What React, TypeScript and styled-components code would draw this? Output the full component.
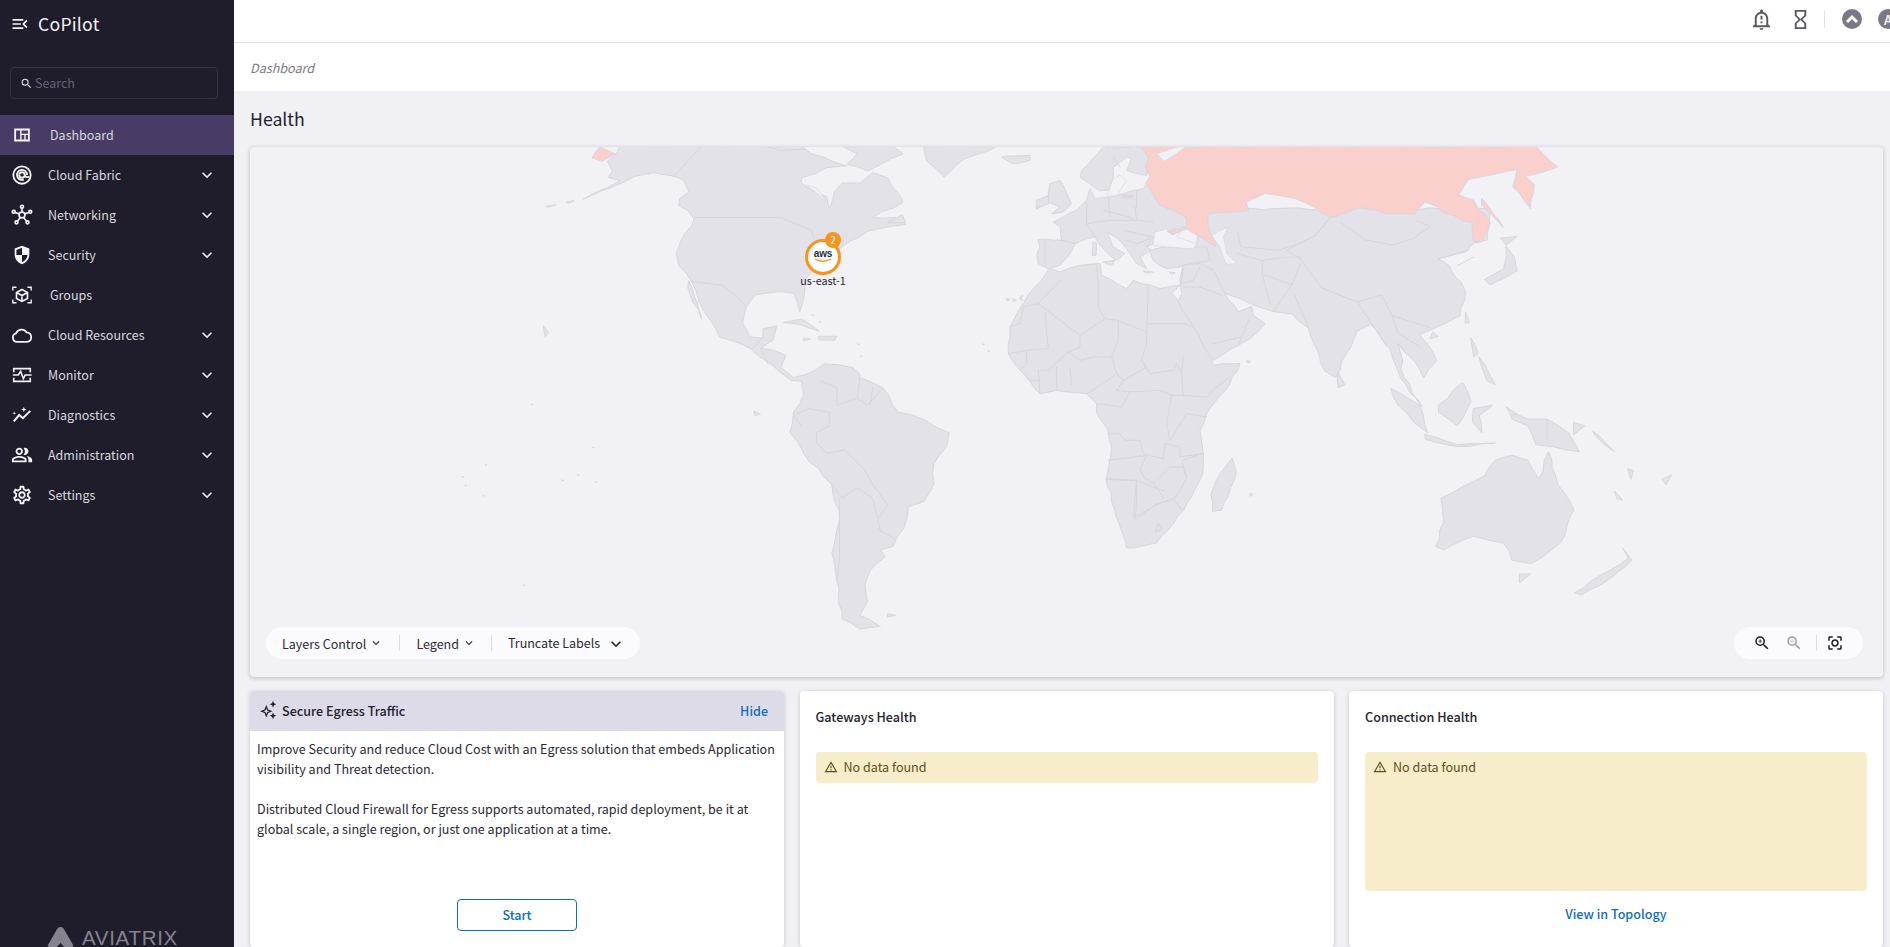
import React from "react";
import styled, { createGlobalStyle } from "styled-components";
import {
  MdExpandMore, MdKeyboardArrowDown, MdMenuOpen, MdOutlineCenterFocusStrong, MdOutlineHourglassEmpty,
  MdOutlineNotificationImportant, MdOutlinePeopleAlt, MdOutlineSettings, MdOutlineWarningAmber, MdOutlineZoomIn,
  MdOutlineZoomOut, MdSearch,
} from "react-icons/md";

const FONT = `"Noto Sans CJK JP", "Noto Sans", sans-serif`;

const Global = createGlobalStyle`
  html, body { margin: 0; padding: 0; height: 947px; overflow: hidden; background: #f0f0f5; }
  body { font-family: ${FONT}; font-size: 12.55px; color: #2a2833; }
  * { box-sizing: border-box; }
`;

const Shell = styled.div`display: flex; width: 1890px; height: 947px; overflow: hidden;`;
const Sidebar = styled.aside`
  width: 234px; height: 947px; flex: none; background: #1f1c2b; display: flex; flex-direction: column; overflow: hidden;
`;
const Brand = styled.div`
  height: 47px; display: flex; align-items: center; padding: 0 0 2px 10px; gap: 8px; color: #f2f2f4; font-size: 17.7px; letter-spacing: .2px;
  svg { font-size: 20px; margin-top: 2px; }
`;
const SearchBox = styled.div`
  margin: 20px 16px 16px 10px; height: 32px; border: 1px solid #35314a; border-radius: 4px;
  display: flex; align-items: center; padding: 0 0 2px 9px; gap: 2px; color: #67637a; font-size: 12.5px;
  svg { color: #e4e3e8; font-size: 13px; margin-top: 2px; }
`;
const NavList = styled.nav`display: flex; flex-direction: column;`;
const NavItem = styled.div<{ $active?: boolean }>`
  height: 40px; display: flex; align-items: center; position: relative; padding-left: 10px; padding-right: 17px;
  background: ${(p) => (p.$active ? "#483c66" : "transparent")}; color: #d9d8de; font-size: 12.5px;
`;
const NavIcon = styled.span<{ $wide?: boolean }>`
  width: 24px; height: 24px; flex: none; margin-right: ${(p) => (p.$wide ? 16 : 14)}px; color: #f4f4f6; display: flex; align-items: center; justify-content: center;
  svg { width: 22px; height: 22px; display: block; }
`;
const NavLabel = styled.span`flex: 1; margin-top: -2px;`;
const NavChevron = styled(MdExpandMore)`font-size: 20px; color: #ecebef;`;
const LogoClip = styled.div`
  margin-top: auto; height: 20px; overflow: hidden; padding-left: 47px; display: flex; align-items: flex-start; gap: 8px;
  color: #85838e;
`;
const LogoText = styled.span`
  font-family: "Liberation Sans", sans-serif; font-size: 20.5px; line-height: 19px; margin-top: 1px; letter-spacing: .7px; font-weight: 400;
`;

const Main = styled.main`flex: 1; min-width: 0; display: flex; flex-direction: column; height: 947px; overflow: hidden;`;
const TopBar = styled.header`
  height: 43px; flex: none; background: #fff; border-bottom: 1px solid #e3e3e6; display: flex; align-items: center; justify-content: flex-end;
  padding-bottom: 4px; overflow: hidden; color: #5a5865;
`;
const TopIcon = styled.span<{ $mr: number }>`
  display: flex; margin-right: ${(p) => p.$mr}px; svg { font-size: 23px; display: block; }
`;
const TopDivider = styled.span`width: 1px; height: 17px; background: #e2e2e6; margin-right: 17px;`;
const Round = styled.span<{ $mr: number }>`
  flex: none; width: 20px; height: 20px; border-radius: 50%; background: #7b7985; color: #fff; display: flex; align-items: center; justify-content: center;
  margin-right: ${(p) => p.$mr}px; font-size: 13px; font-weight: 500;
  svg { width: 14px; height: 14px; }
`;
const Crumbs = styled.div`
  height: 48px; flex: none; background: #fff; display: flex; align-items: center; padding-left: 16px; font-style: italic; color: #7b7a82; font-size: 12.6px;
`;
const Content = styled.div`flex: 1; background: #f0f0f5; padding: 0 7px 0 16px;`;
const Title = styled.h1`
  margin: 0; height: 56px; font-size: 17.7px; font-weight: 400; color: #24222c; line-height: 54px;
`;
const MapCard = styled.section`
  position: relative; height: 530px; background: #f1f1f6; border-radius: 4px; box-shadow: 0 1px 4px rgba(30, 28, 45, .25); overflow: hidden;
`;
const MapSvg = styled.svg`
  display: block; width: 100%; height: 100%;
  polygon, polyline { vector-effect: non-scaling-stroke; stroke-linejoin: round; stroke-linecap: round; }
`;
const Toolbar = styled.div`
  position: absolute; left: 16px; bottom: 18px; width: 374px; height: 32px; border-radius: 16px; background: #fbfbfd;
  display: flex; align-items: center; padding-left: 16px; color: #2b2934; font-size: 12.5px;
`;
const ToolLabel = styled.span`display: flex; align-items: center; white-space: nowrap; svg { font-size: 14px; margin-left: 3px; }`;
const ToolSep = styled.span<{ $ml: number; $mr: number }>`
  flex: none; width: 1px; height: 16px; background: #dcdce4; margin: 0 ${(p) => p.$mr}px 0 ${(p) => p.$ml}px;
`;
const TruncLabel = styled.span`display: flex; align-items: center; white-space: nowrap; margin-top: -2px; svg { font-size: 20px; margin: 4px 0 0 6px; }`;
const ZoomPill = styled.div`
  position: absolute; right: 20px; bottom: 18px; width: 129px; height: 32px; border-radius: 16px; background: #fbfbfd; display: flex; align-items: center;
  padding-left: 19px;
`;
const ZoomBtn = styled.span<{ $dim?: boolean; $mr: number }>`
  display: flex; margin-right: ${(p) => p.$mr}px; color: ${(p) => (p.$dim ? "#9c9ba2" : "#1d1b26")}; svg { font-size: 18px; }
`;
const Marker = styled.div`
  position: absolute; left: 555px; top: 92px; width: 36px; display: flex; flex-direction: column; align-items: center;
`;
const Ring = styled.div`
  position: relative; width: 36px; height: 36px; border-radius: 50%; border: 3px solid #f7941d; background: #fff; display: flex; flex-direction: column; align-items: center; justify-content: center;
`;
const AwsWord = styled.span`font: 700 10px/8px "Liberation Sans", sans-serif; color: #232f3e; margin-top: -1px; letter-spacing: -.2px;`;
const Badge = styled.span`
  position: absolute; right: -3px; top: -10px; width: 16px; height: 16px; border-radius: 50%; background: #f7941d; color: #fff; font-size: 10px; line-height: 15px; text-align: center;
`;
const MarkerLabel = styled.span`font-size: 10.8px; line-height: 14px; color: #2a2833; white-space: nowrap; margin-top: -2px;`;

const Cards = styled.div`display: grid; grid-template-columns: 534px 534px 1fr; gap: 15.5px; margin-top: 14px; height: 256px;`;
const Card = styled.section`
  background: #fff; border-radius: 4px; box-shadow: 0 1px 4px rgba(30, 28, 45, .2); display: flex; flex-direction: column; min-width: 0;
`;
const PromoHead = styled.div`
  height: 40px; background: #dedbe9; border-radius: 4px 4px 0 0; display: flex; align-items: center; padding: 0 16px 2px 8px; font-weight: 500; color: #24222c;
  svg { width: 20px; height: 20px; margin-right: 4px; }
`;
const PromoTitle = styled.span`flex: 1;`;
const LinkText = styled.span`color: #0f6cbd; font-weight: 500;`;
const PromoBody = styled.div`padding: 8px 7px 0; line-height: 20px; color: #2a2833; flex: 1;`;
const Para = styled.p`margin: 0 0 20px;`;
const StartRow = styled.div`display: flex; justify-content: center; margin-bottom: 16px;`;
const StartButton = styled.button`
  width: 120px; height: 32px; border: 1px solid #0f6cbd; border-radius: 4px; background: #fff; color: #0f6cbd; font: 500 12.5px ${FONT}; padding: 0 0 2px;
`;
const HealthBody = styled.div`padding: 0 16px; display: flex; flex-direction: column; flex: 1;`;
const HealthTitle = styled.h2`margin: 0; height: 61px; line-height: 52px; font-size: 12.6px; font-weight: 500; color: #24222c;`;
const Notice = styled.div<{ $tall?: boolean }>`
  height: ${(p) => (p.$tall ? "139px" : "31px")}; background: #f7edcb; border-radius: 4px; padding: 0 8px; display: flex; align-items: flex-start; gap: 6px;
  color: #5e4e1c; line-height: 29px;
  svg { font-size: 14px; margin-top: 8px; flex: none; }
`;
const TopologyLink = styled(LinkText)`text-align: center; line-height: 20px; margin-top: 13px;`;

const LAND = "#e3e2e8";
const EDGE = "#d7d6de";
const BG = "#f1f1f6";
const PINK = "#f9d0cb";

/* Breaks long straight coast segments into short ones with small fixed offsets, so a coast reads as a coast. */
const rough = (points: string, amp = 3.5) => {
  const pts = points.trim().split(/\s+/).map((s) => s.split(",").map(Number));
  const out: string[] = [];
  let seed = 7;
  pts.forEach(([x, y], i) => {
    const [nx, ny] = pts[(i + 1) % pts.length];
    out.push(`${x},${y}`);
    const len = Math.hypot(nx - x, ny - y);
    const n = Math.floor(len / 22);
    for (let k = 1; k < n; k++) {
      seed = (seed * 31 + 11) % 101;
      const off = ((seed % 21) / 10 - 1) * amp;
      const t = k / n;
      out.push(`${(x + (nx - x) * t + (-(ny - y) / len) * off).toFixed(1)},${(y + (ny - y) * t + ((nx - x) / len) * off).toFixed(1)}`);
    }
  });
  return out.join(" ");
};

const Land = ({ p, fill = LAND }: { p: string; fill?: string }) => <polygon points={rough(p)} fill={fill} stroke={EDGE} strokeWidth={1} />;
const Sea = ({ p }: { p: string }) => <polygon points={rough(p, 2)} fill={BG} stroke={EDGE} strokeWidth={0.6} />;
const Border = ({ p }: { p: string }) => <polyline points={p} fill="none" stroke={EDGE} strokeWidth={1} />;
const Speck = ({ x, y }: { x: number; y: number }) => <polygon points={`${x},${y} ${x + 6},${y + 3} ${x + 1},${y + 6}`} fill={EDGE} />;

const americas = [
  "745,18 735,45 720,62 730,90 722,108 745,118 700,150 672,172 730,137 775,105 810,95 850,105 868,115 880,150 862,170 860,190 878,205 890,228 885,250 865,290 855,330 860,365 885,410 900,470 925,530 940,572 1000,605 1040,650 1080,698 1100,700 1105,740 1085,790 1078,850 1105,910 1160,1000 1175,1100 1160,1200 1170,1280 1180,1390 1215,1420 1255,1412 1215,1380 1230,1340 1225,1290 1235,1250 1265,1210 1255,1190 1280,1180 1300,1130 1310,1065 1340,1050 1360,1000 1360,940 1385,890 1390,850 1345,815 1290,790 1260,720 1215,690 1215,680 1200,660 1145,650 1110,680 1085,690 1060,660 1070,625 1045,610 1020,605 1045,580 1052,540 1025,548 1025,575 1000,572 985,530 992,485 1010,450 1060,440 1085,445 1097,500 1105,460 1110,400 1180,310 1230,265 1260,255 1305,245 1285,225 1240,225 1300,180 1270,110 1240,95 1215,125 1180,125 1165,150 1155,200 1150,165 1100,125 1100,110 1150,80 1190,75 1120,40 1100,18",
  "880,410 905,520 878,430",
  "1065,530 1100,520 1135,555 1095,535",
  "1135,570 1170,570 1165,582 1135,580",
  "1105,575 1118,578 1105,582",
  "1340,18 1345,60 1380,108 1420,55 1485,18",
  "1180,18 1210,40 1190,70 1230,90 1300,40 1280,18",
  "1030,18 1060,30 1110,28 1100,18",
  "1270,240 1305,240 1298,218",
  "1270,1376 1285,1380 1270,1385",
  "595,540 605,560 598,570",
  "1008,788 1020,795 1010,800",
  "640,180 655,176 645,184", "600,192 620,188 605,195",
];
const americaLines = [
  "905,18 850,105", "890,225 1060,225 1120,262 1125,285", "885,410 945,422 975,455 992,485", "1025,575 1005,605",
  "1020,605 1035,650", "1140,700 1170,720 1170,770 1210,750 1215,690", "1210,750 1230,770 1260,720", "1235,770 1240,720",
  "1085,800 1115,780 1155,790 1155,830 1130,850 1130,880 1150,910 1185,900 1225,960 1240,1000 1270,1060 1250,1100 1240,1040 1210,1010 1180,1040 1160,1000",
  "1175,1040 1175,1220 1170,1280", "1250,1130 1285,1160", "1100,830 1085,800", "1250,1100 1255,1135",
];
const pacificSpecks = [[480, 940], [435, 975], [440, 1000], [475, 1030], [630, 985], [660, 970], [695, 990], [690, 890], [555, 1290], [570, 765], [1120, 505], [1135, 525], [1210, 590], [1215, 625], [1505, 460], [1530, 462], [1455, 590], [1465, 610]];

const afroEurasia = [
  "370,0 305,70 300,90 330,110 355,130 385,130 400,95 400,60 440,30 455,35 440,70 500,85 510,40 490,0",
  "220,225 250,210 290,190 320,160 330,125 345,155 390,150 430,140 490,125 500,110 540,175 620,210 620,240 590,240 570,250 530,255 520,290 500,300 515,310 480,330 500,365 470,350 450,320 425,285 380,255 400,300 435,320 410,340 375,310 345,270 320,275 285,290 245,280 240,240",
  "175,278 245,280 285,290 262,330 240,355 205,365 175,350 170,320 180,300",
  "510,310 560,300 620,305 680,300 690,340 620,355 590,362 560,365 520,340",
  "210,110 240,100 275,170 250,195 215,200 240,180 205,165",
  "170,160 205,145 205,170 170,185",
  "65,30 150,25 150,40 100,50",
  "340,285 350,290 348,325 338,325",
  "370,345 405,340 395,355",
  "490,372 520,375 500,378",
  "570,375 585,378 575,382",
  "210,365 240,375 300,355 360,350 365,385 440,425 460,400 540,425 600,415 575,440 600,465 640,540 695,640 700,655 780,650 750,710 680,800 660,850 670,920 668,981 611,1090 530,1188 440,1203 416,1126 378,996 395,900 385,850 350,800 350,770 320,740 230,730 180,740 120,670 85,620 90,540 130,470 165,420",
  "600,395 610,355 660,350 700,370 735,440 775,495 815,478 820,505 855,530 810,575 775,595 700,640 692,625 640,540 595,465 605,440",
  "80,455 90,458 82,462", "100,455 110,460 100,463", "120,450 128,445 122,458",
  "800,642 812,642 805,648",
];
const afroLines = [
  "175,470 300,565 375,515 410,520 500,555 505,420", "505,530 615,530 640,540", "195,497 205,605 140,610", "300,565 300,600 265,615 205,670",
  "415,520 415,580 395,630 410,680 430,700 500,660 485,640 500,590 500,555", "265,615 300,640 340,630 395,630", "410,680 370,710 320,740",
  "430,700 410,730 450,735 540,730 575,745 610,745 605,680 590,650 580,670 510,680 490,650", "610,745 680,750 710,720 750,690", "610,630 605,680",
  "450,735 425,780 350,770", "575,745 560,830 570,880 620,800 680,810", "385,860 420,860 435,880 480,880 490,920 550,935 555,890 600,900 600,930 670,920",
  "385,940 500,925 480,965 490,990 520,1010 570,960 610,960 620,990 600,1030", "380,995 470,1000 470,1060 465,1120 530,1070 580,1060 600,1030", "350,360 355,410 355,480 375,515",
  "240,400 175,470 130,480 120,530 90,540", "205,670 175,670 180,740", "230,660 230,730", "270,665 275,715", "130,680 150,700 180,700", "85,620 140,610 140,650 120,670",
  "320,170 320,230 345,270", "385,150 390,210", "470,180 470,130", "465,180 470,220 520,225", "195,280 195,350", "245,280 290,290", "320,230 390,220 470,220", "430,250 520,270 500,300", "370,190 430,205 460,215", "440,280 470,290 510,275",
  "610,355 605,410", "605,410 640,400 660,360", "660,420 725,445", "700,590 785,570 810,510", "610,420 660,420", "775,595 785,570", "400,30 420,60",
];

const asiaBase = "290,290 300,200 830,200 825,290 800,300 785,325 745,340 735,345 755,365 785,440 775,510 730,545 715,555 700,565 732,640 708,690 690,640 660,590 672,690 705,775 665,690 645,605 625,560 610,535 585,555 545,690 525,670 495,545 465,505 430,498 395,480 340,445 305,380 262,385";
const russia = "185,18 200,50 195,80 203,107 195,125 221,190 270,224 270,253 235,265 245,275 270,258 305,290 325,310 310,245 310,215 385,205 380,180 415,155 470,170 540,225 590,195 640,215 690,215 710,180 780,235 798,240 800,295 815,295 830,240 800,175 772,160 790,115 850,95 880,85 872,135 905,200 912,130 895,105 955,78 915,18";
const asiaIslands = [
  "860,310 875,340 880,380 830,420 820,405 855,375 860,340", "850,285 880,280 860,305", "785,500 792,530 785,532", "725,558 735,570 720,577",
  "795,575 808,620 800,630", "810,630 840,710 825,700 815,660", "550,675 562,710 550,720", "648,722 700,770 715,850 690,820 660,770",
  "780,705 795,760 770,830 735,790 735,770", "800,780 835,770 810,800 815,850 798,820", "710,855 770,885 840,880 770,890 712,870",
  "870,790 900,810 935,810 975,850 995,905 945,890 915,885 900,830 870,810", "985,820 1005,830 985,855", "1020,845 1060,905 1025,860",
  "355,925 362,965 335,1075 318,1078 315,1030 325,990", "740,1040 760,1025 820,975 840,930 870,915 900,930 920,985 938,905 955,1000 985,1075 960,1170 905,1230 870,1220 855,1170 800,1150 745,1190 730,1180 745,1110",
  "885,1260 905,1260 885,1285", "1075,1185 1092,1220 1050,1275 1000,1320 985,1315 1050,1250 1085,1215", "1060,1020 1075,1045 1065,1042",
  "1085,955 1095,960 1090,985", "1148,985 1165,972 1155,1000", "388,1025 393,1030 388,1034", "860,775 880,795 870,800",
];
const asiaLines = [
  "365,270 370,310 440,320 480,300 510,275 535,225", "535,225 510,275 480,300 455,320 480,345 520,430 585,470 630,450 650,510 680,525 720,545",
  "555,240 600,290 650,305 690,285 720,250 695,235", "480,360 465,420 430,498", "470,450 495,545", "410,350 410,390 425,480", "410,390 465,420",
  "585,470 610,530 640,600", "650,510 660,560 700,600", "365,330 410,350 450,340 480,340", "935,810 935,875", "770,365 800,340", "790,320 745,340",
  "230,1020 180,990 122,985", "178,990 172,1095 215,1060 245,1040 262,1075", "218,1115 226,1130 212,1138 218,1115", "208,990 228,1040", "300,910 262,930 268,975",
];

const Sparkle = () => (
  <svg viewBox="0 0 24 24" fill="#24222c">
    <path d="M10 6l2.2 5.3L17.500 13.500l-5.300 2.200L10 21l-2.200-5.300L2.500 13.500l5.300-2.200zM10 9.800l-1 2.700-2.700 1 2.700 1 1 2.700 1-2.700 2.700-1-2.700-1z" fillRule="evenodd" />
    <path d="M18 1l1.200 2.800L22 5l-2.800 1.200L18 9l-1.200-2.800L14 5l2.800-1.200zM18 15l1.200 2.800L22 19l-2.800 1.200L18 23l-1.200-2.800L14 19l2.800-1.200z" />
  </svg>
);
const DashIcon = () => (
  <svg viewBox="0 0 24 24" fill="currentColor"><path fillRule="evenodd" d="M3.500 5h17v14h-17zM5.500 7v10h4.500V7zM11.500 7v3.500H18.500V7zM11.500 12v5h3v-5zM16 12v5h2.500v-5z" /></svg>
);
const FabricIcon = () => (
  <svg viewBox="0 0 24 24" fill="none" stroke="currentColor" strokeWidth="2"><circle cx="12" cy="12" r="9.500" /><circle cx="12" cy="12" r="3" /><path d="M15 12a3 3 0 0 0 5 1.500M17.500 12A5.500 5.500 0 1 0 14 17" /></svg>
);
const NetIcon = () => (
  <svg viewBox="0 0 24 24" fill="none" stroke="currentColor" strokeWidth="1.800">
    <circle cx="12" cy="12" r="3.200" /><circle cx="12" cy="3" r="1.600" /><circle cx="3" cy="8.500" r="1.600" /><circle cx="21" cy="8.500" r="1.600" /><circle cx="6" cy="20" r="1.600" /><circle cx="18" cy="20" r="1.600" />
    <path d="M12 4.600v4.200M4.500 9.300l4.600 1.500M19.500 9.300l-4.600 1.500M7 18.700l3.200-4M17 18.700l-3.200-4" />
  </svg>
);
const ShieldIcon = () => (
  <svg viewBox="0 0 24 24" fill="currentColor"><path fillRule="evenodd" d="M12 2l8 3v6.500c0 5-3.400 9-8 10.500-4.600-1.500-8-5.500-8-10.500V5zM12 4.200V12H5.900V6.500zM12 12h6.100c-.5 3.700-2.900 6.500-6.100 7.800z" /></svg>
);
const GroupIcon = () => (
  <svg viewBox="0 0 24 24" fill="none" stroke="currentColor" strokeWidth="1.800">
    <path d="M2 7V3.500h4M22 7V3.500h-4M2 17v3.500h4M22 17v3.500h-4" strokeWidth="1.500" />
    <path d="M12 6l6 3.300v6.400L12 19l-6-3.300V9.300zM6 9.300l6 3.300 6-3.300M12 12.600V19" />
  </svg>
);
const MonitorIcon = () => (
  <svg viewBox="0 0 24 24" fill="none" stroke="currentColor" strokeWidth="1.800"><path d="M3 9V5h18v4M3 15v4h18v-4" /><path d="M2 12h6l2.500-4 3 8 2-4h7" /></svg>
);
const DiagIcon = () => (
  <svg viewBox="0 0 24 24" fill="none" stroke="currentColor" strokeWidth="2.200"><path d="M3 19l6-7 4 3.500 8-8" /><path d="M14 3l.8 2.200L17 6l-2.200.8L14 9l-.8-2.200L11 6l2.200-.8zM3.500 8l.5 1.500L5.500 10 4 10.500 3.500 12 3 10.500 1.500 10 3 9.500z" fill="currentColor" stroke="none" /></svg>
);
const CloudIcon = () => (
  <svg viewBox="0 0 24 24" fill="none" stroke="currentColor" strokeWidth="1.900"><path d="M6.500 19.500A4.700 4.700 0 0 1 5.500 10.300 6.500 6.500 0 0 1 17 9.200a5.200 5.200 0 0 1 .8 10.300z" /></svg>
);

const items: { label: string; Icon: React.ComponentType; more?: boolean; wide?: boolean; active?: boolean }[] = [
  { label: "Dashboard", Icon: DashIcon, wide: true, active: true },
  { label: "Cloud Fabric", Icon: FabricIcon, more: true },
  { label: "Networking", Icon: NetIcon, more: true },
  { label: "Security", Icon: ShieldIcon, more: true },
  { label: "Groups", Icon: GroupIcon, wide: true },
  { label: "Cloud Resources", Icon: CloudIcon, more: true },
  { label: "Monitor", Icon: MonitorIcon, more: true },
  { label: "Diagnostics", Icon: DiagIcon, more: true },
  { label: "Administration", Icon: MdOutlinePeopleAlt, more: true },
  { label: "Settings", Icon: MdOutlineSettings, more: true },
];

export default function App() {
  return (
    <>
      <Global />
      <Shell>
        <Sidebar>
          <Brand><MdMenuOpen />CoPilot</Brand>
          <SearchBox><MdSearch />Search</SearchBox>
          <NavList>
            {items.map(({ label, Icon, more, wide, active }) => (
              <NavItem key={label} $active={active}>
                <NavIcon $wide={wide}><Icon /></NavIcon>
                <NavLabel>{label}</NavLabel>
                {more && <NavChevron />}
              </NavItem>
            ))}
          </NavList>
          <LogoClip>
            <svg width="27" height="30" viewBox="0 0 28 30" fill="#85838e"><path d="M10.500 1.500a4 4 0 0 1 7 0L27.500 19l-6 5-7.500-8-7.500 8-6-5z" /></svg>
            <LogoText>AVIATRIX</LogoText>
          </LogoClip>
        </Sidebar>
        <Main>
          <TopBar>
            <TopIcon $mr={16}><MdOutlineNotificationImportant /></TopIcon>
            <TopIcon $mr={12}><MdOutlineHourglassEmpty /></TopIcon>
            <TopDivider />
            <Round $mr={16}>
              <svg viewBox="0 0 14 14" fill="none" stroke="#fff" strokeWidth="3"><path d="M2 10l5-5 5 5" /></svg>
            </Round>
            <Round $mr={-8}>A</Round>
          </TopBar>
          <Crumbs>Dashboard</Crumbs>
          <Content>
            <Title>Health</Title>
            <MapCard>
              <MapSvg viewBox="250 147 1633 530" preserveAspectRatio="none">
                <g transform="translate(240 140) scale(.5102 .3444)">
                  {americas.map((p) => <Land key={p} p={p} />)}
                  {americaLines.map((p) => <Border key={p} p={p} />)}
                  {pacificSpecks.map(([x, y]) => <Speck key={`${x}-${y}`} x={x} y={y} />)}
                  <Land p="690,50 705,20 735,40 710,62" fill={PINK} />
                  <Sea p="1110,130 1150,180 1130,140" />
                </g>
                <g transform="translate(1040 140) scale(.5421 .3444)">
                  <Land p={asiaBase} />
                  {asiaIslands.map((p) => <Land key={p} p={p} />)}
                </g>
                <g transform="translate(980 147) scale(.3333)">
                  {afroEurasia.map((p) => <Land key={p} p={p} />)}
                  {afroLines.map((p) => <Border key={p} p={p} />)}
                  <Sea p="525,255 570,245 610,245 590,270 650,290 640,305 560,300 520,295" />
                  <Sea p="400,95 420,85 440,100 410,145 380,150" />
                </g>
                <g transform="translate(1040 140) scale(.5421 .3444)">
                  <Land p={russia} fill={PINK} />
                  <Land p="815,170 855,255 835,220 815,190" fill={PINK} />
                  <Sea p="215,40 250,22 270,18 230,62" />
                  {asiaLines.map((p) => <Border key={p} p={p} />)}
                </g>
                <g transform="translate(980 147) scale(.3333)">
                  <Sea p="695,265 745,240 730,270 740,320 770,350 740,352 720,300" />
                  <Land p="430,145 458,145 455,152 432,152" fill={PINK} />
                  <Land p="565,250 580,248 575,262" fill={PINK} />
                </g>
              </MapSvg>
              <Marker>
                <Ring>
                  <AwsWord>aws</AwsWord>
                  <svg width="20" height="5" viewBox="0 0 20 5" fill="none" stroke="#f7941d" strokeWidth="1.300"><path d="M2 1c4 3 11 3 16 0" /></svg>
                  <Badge>2</Badge>
                </Ring>
                <MarkerLabel>us-east-1</MarkerLabel>
              </Marker>
              <Toolbar>
                <ToolLabel>Layers Control<MdKeyboardArrowDown /></ToolLabel>
                <ToolSep $ml={16} $mr={16} />
                <ToolLabel>Legend<MdKeyboardArrowDown /></ToolLabel>
                <ToolSep $ml={15} $mr={16} />
                <TruncLabel>Truncate Labels<MdKeyboardArrowDown /></TruncLabel>
              </Toolbar>
              <ZoomPill>
                <ZoomBtn $mr={14}><MdOutlineZoomIn /></ZoomBtn>
                <ZoomBtn $dim $mr={13}><MdOutlineZoomOut /></ZoomBtn>
                <ToolSep $ml={0} $mr={9} />
                <ZoomBtn $mr={0}><MdOutlineCenterFocusStrong /></ZoomBtn>
              </ZoomPill>
            </MapCard>
            <Cards>
              <Card>
                <PromoHead><Sparkle /><PromoTitle>Secure Egress Traffic</PromoTitle><LinkText>Hide</LinkText></PromoHead>
                <PromoBody>
                  <Para>Improve Security and reduce Cloud Cost with an Egress solution that embeds Application visibility and Threat detection.</Para>
                  <Para>Distributed Cloud Firewall for Egress supports automated, rapid deployment, be it at global scale, a single region, or just one application at a time.</Para>
                </PromoBody>
                <StartRow><StartButton>Start</StartButton></StartRow>
              </Card>
              <Card>
                <HealthBody>
                  <HealthTitle>Gateways Health</HealthTitle>
                  <Notice><MdOutlineWarningAmber />No data found</Notice>
                </HealthBody>
              </Card>
              <Card>
                <HealthBody>
                  <HealthTitle>Connection Health</HealthTitle>
                  <Notice $tall><MdOutlineWarningAmber />No data found</Notice>
                  <TopologyLink>View in Topology</TopologyLink>
                </HealthBody>
              </Card>
            </Cards>
          </Content>
        </Main>
      </Shell>
    </>
  );
}
